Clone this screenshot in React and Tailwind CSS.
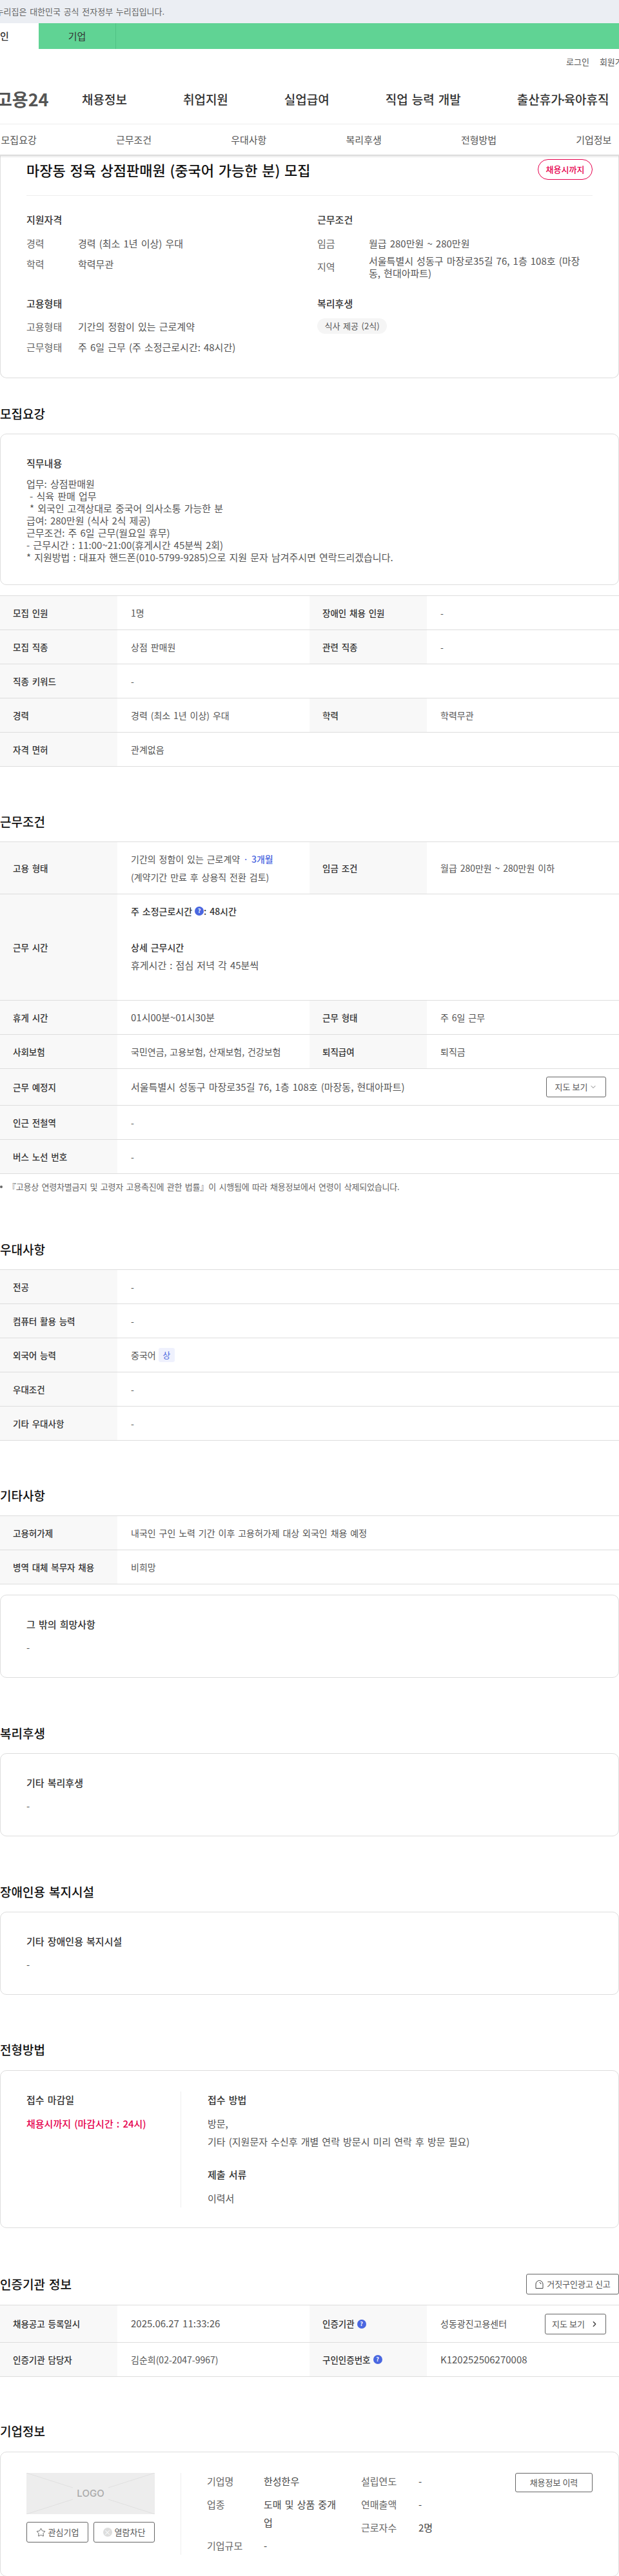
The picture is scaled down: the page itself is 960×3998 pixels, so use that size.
import { ChevronDown, ChevronRight, Star } from "lucide-react";

const NAV = ["채용정보", "취업지원", "실업급여", "직업 능력 개발"];
const TABS = ["모집요강", "근무조건", "우대사항", "복리후생", "전형방법", "기업정보"];

function Heading({ children, className = "" }) {
  return (
    <h2 className={`flex h-[32px] items-center text-[19px] font-medium text-[#111] ${className}`}>
      {children}
    </h2>
  );
}

function Label({ children }) {
  return (
    <div className="flex w-[182px] shrink-0 items-center bg-[#f8f8f8] pl-[20px] text-[13.5px] font-medium text-[#333]">
      {children}
    </div>
  );
}

function Value({ children, className = "" }) {
  return (
    <div className={`flex items-center pl-[21px] text-[14px] text-[#555] ${className}`}>
      {children}
    </div>
  );
}

function Row({ children, className = "h-[53px]" }) {
  return <div className={`flex border-b border-[#ddd] ${className}`}>{children}</div>;
}

function Pair({ a, b, c, d, className }) {
  return (
    <Row className={className}>
      <Label>{a}</Label>
      <Value className="w-[298px]">{b}</Value>
      <Label>{c}</Label>
      <Value className="flex-1">{d}</Value>
    </Row>
  );
}

function Single({ a, b, className }) {
  return (
    <Row className={className}>
      <Label>{a}</Label>
      <Value className="flex-1">{b}</Value>
    </Row>
  );
}

function Help() {
  return (
    <span className="ml-[4px] inline-flex h-[14px] w-[14px] items-center justify-center rounded-full bg-[#4a67e0] text-[9px] font-bold text-white">
      ?
    </span>
  );
}

function SmallCard({ title }) {
  return (
    <div className="h-[129px] rounded-[10px] border border-[#ddd] px-[40px] pt-[35px]">
      <p className="flex h-[20px] items-center text-[15px] font-medium text-[#333]">{title}</p>
      <p className="mt-[16px] flex h-[20px] items-center text-[15px] text-[#555]">-</p>
    </div>
  );
}

function InfoRow({ label, labelW = "w-[88px]", children }) {
  return (
    <div className="flex text-[15px] leading-[28px]">
      <span className={`shrink-0 text-[#666] ${labelW}`}>{label}</span>
      <span className="text-[#444]">{children}</span>
    </div>
  );
}

function SummaryRow({ label, children }) {
  return (
    <div className="flex h-[32px] items-center text-[15px]">
      <span className="w-[80px] shrink-0 text-[#666]">{label}</span>
      <span className="text-[#555]">{children}</span>
    </div>
  );
}

export default function App() {
  return (
    <div className="h-[3998px] w-[960px] overflow-hidden bg-white [font-family:'Noto_Sans_CJK_KR',sans-serif] [word-spacing:0.11em]">
      <div className="h-[36px] bg-[#ebeef3]">
        <p className="-ml-[23px] whitespace-nowrap text-[13px] leading-[36px] text-[#666]">
          이 누리집은 대한민국 공식 전자정부 누리집입니다.
        </p>
      </div>

      <div className="flex h-[40px] bg-[#60d394] text-[15px] text-[#333]">
        <div className="-ml-[60px] flex w-[120px] items-center justify-center bg-white font-medium">개인</div>
        <div className="flex w-[120px] items-center justify-center border-r border-[#50c284]">기업</div>
      </div>

      <div className="flex h-[40px] items-center gap-[16px] pl-[878px] text-[13px] whitespace-nowrap text-[#555]">
        <span>로그인</span>
        <span>회원가입</span>
      </div>

      <div className="flex h-[77px] items-center whitespace-nowrap border-b border-[#eee]">
        <div className="-ml-[6px] w-[133px] text-[27px] font-bold text-[#555] [word-spacing:0]">고용24</div>
        <div className="flex gap-[87px] text-[19px] font-medium text-[#333]">
          {NAV.map((item) => (
            <span key={item}>{item}</span>
          ))}
          <span className="flex">
            출산휴가<span className="flex w-[3px] justify-center">·</span>육아휴직
          </span>
        </div>
      </div>

      <div className="relative z-10 -ml-[60px] grid h-[49px] w-[1070px] grid-cols-6 text-[15px] text-[#555]">
        {TABS.map((t) => (
          <span key={t} className="flex items-center justify-center">{t}</span>
        ))}
      </div>
      <div className="relative z-10 -mt-[2px] h-[2px] bg-[#ddd] shadow-[0_1px_3px_rgba(0,0,0,0.15)]" />

      <div className="h-[345px] rounded-b-[10px] border border-t-0 border-[#ddd] px-[40px] pt-[5px]">
        <div className="flex h-[32px] items-center justify-between">
          <h1 className="text-[22px] font-medium text-[#111]">마장동 정육 상점판매원 (중국어 가능한 분) 모집</h1>
          <span className="flex h-[32px] w-[85px] items-center justify-center rounded-full border border-[#e6004d] text-[13px] font-medium text-[#e6004d]">
            채용시까지
          </span>
        </div>
        <div className="mt-[24px] border-t border-[#eee]" />
        <div className="mt-[27px] grid grid-cols-[451px_1fr]">
          <div>
            <h3 className="flex h-[20px] items-center text-[15px] font-medium text-[#333]">지원자격</h3>
            <div className="mt-[11px]">
              <SummaryRow label="경력">경력 (최소 1년 이상) 우대</SummaryRow>
              <SummaryRow label="학력">학력무관</SummaryRow>
            </div>
            <h3 className="mt-[35px] flex h-[20px] items-center text-[15px] font-medium text-[#333]">고용형태</h3>
            <div className="mt-[10px]">
              <SummaryRow label="고용형태">기간의 정함이 있는 근로계약</SummaryRow>
              <SummaryRow label="근무형태">주 6일 근무 (주 소정근로시간: 48시간)</SummaryRow>
            </div>
          </div>
          <div>
            <h3 className="flex h-[20px] items-center text-[15px] font-medium text-[#333]">근무조건</h3>
            <div className="mt-[11px]">
              <SummaryRow label="임금">월급 280만원 ~ 280만원</SummaryRow>
              <div className="flex h-[40px] items-center text-[15px]">
                <span className="w-[80px] shrink-0 text-[#666]">지역</span>
                <span className="w-[335px] leading-[19px] text-[#555]">서울특별시 성동구 마장로35길 76, 1층 108호 (마장동, 현대아파트)</span>
              </div>
            </div>
            <h3 className="mt-[27px] flex h-[20px] items-center text-[15px] font-medium text-[#333]">복리후생</h3>
            <span className="mt-[13px] inline-flex h-[24px] w-[108px] items-center justify-center rounded-full bg-[#f5f5f5] text-[13px] text-[#555]">
              식사 제공 (2식)
            </span>
          </div>
        </div>
      </div>

      <Heading className="mt-[39px] mb-[15px]">모집요강</Heading>
      <div className="h-[235px] rounded-[10px] border border-[#ddd] px-[40px] pt-[35px]">
        <h3 className="flex h-[20px] items-center text-[15px] font-medium text-[#333]">직무내용</h3>
        <div className="mt-[12px] whitespace-pre text-[15px] leading-[19px] text-[#555]">
          {`업무: 상점판매원
 - 식육 판매 업무
 * 외국인 고객상대로 중국어 의사소통 가능한 분
급여: 280만원 (식사 2식 제공)
근무조건: 주 6일 근무(월요일 휴무)
- 근무시간 : 11:00~21:00(휴게시간 45분씩 2회)
* 지원방법 : 대표자 핸드폰(010-5799-9285)으로 지원 문자 남겨주시면 연락드리겠습니다.`}
        </div>
      </div>

      <div className="mt-[16px] border-t border-[#ddd]">
        <Pair a="모집 인원" b="1명" c="장애인 채용 인원" d="-" />
        <Pair a="모집 직종" b="상점 판매원" c="관련 직종" d="-" />
        <Single a="직종 키워드" b="-" />
        <Pair a="경력" b="경력 (최소 1년 이상) 우대" c="학력" d="학력무관" />
        <Single a="자격 면허" b="관계없음" />
      </div>

      <Heading className="mt-[69px] mb-[15px]">근무조건</Heading>
      <div className="border-t border-[#ddd]">
        <Pair
          className="h-[81px]"
          a="고용 형태"
          b={
            <div className="leading-[28px]">
              <p>
                기간의 정함이 있는 근로계약 <span className="text-[#4a67e0]">· <span className="font-medium">3개월</span></span>
              </p>
              <p>(계약기간 만료 후 상용직 전환 검토)</p>
            </div>
          }
          c="임금 조건"
          d="월급 280만원 ~ 280만원 이하"
        />
        <Single
          className="h-[165px]"
          a="근무 시간"
          b={
            <div className="leading-[28px]">
              <p className="flex items-center font-medium text-[#333]">
                주 소정근로시간
                <Help />
                <span>: 48시간</span>
              </p>
              <p>&nbsp;</p>
              <p className="font-medium text-[#333]">상세 근무시간</p>
              <p className="text-[15px]">휴게시간 : 점심 저녁 각 45분씩</p>
              <p>&nbsp;</p>
            </div>
          }
        />
        <Pair a="휴게 시간" b={<span className="text-[15px]">01시00분~01시30분</span>} c="근무 형태" d="주 6일 근무" />
        <Pair a="사회보험" b="국민연금, 고용보험, 산재보험, 건강보험" c="퇴직급여" d="퇴직금" />
        <Row className="h-[57px]">
          <Label>근무 예정지</Label>
          <Value className="flex-1 justify-between pr-[20px] text-[15px]">
            서울특별시 성동구 마장로35길 76, 1층 108호 (마장동, 현대아파트)
            <button className="flex h-[32px] w-[93px] items-center justify-center gap-[3px] rounded-[3px] border border-[#666] text-[13px] text-[#555]">
              지도 보기
              <ChevronDown size={12} strokeWidth={1.5} />
            </button>
          </Value>
        </Row>
        <Single a="인근 전철역" b="-" />
        <Single a="버스 노선 번호" b="-" />
      </div>
      <p className="mt-[10px] flex h-[20px] items-center text-[13px] tracking-[-0.2px] text-[#666]">
        <span className="mr-[8px] h-[4px] w-[4px] rounded-full bg-[#666]" />
        『고용상 연령차별금지 및 고령자 고용촉진에 관한 법률』이 시행됨에 따라 채용정보에서 연령이 삭제되었습니다.
      </p>

      <Heading className="mt-[71px] mb-[15px]">우대사항</Heading>
      <div className="border-t border-[#ddd]">
        <Single a="전공" b="-" />
        <Single a="컴퓨터 활용 능력" b="-" />
        <Single
          a="외국어 능력"
          b={
            <>
              중국어
              <span className="ml-[4px] flex h-[22px] w-[25px] items-center justify-center rounded-[3px] bg-[#eff1fd] text-[13px] text-[#4a67e0]">상</span>
            </>
          }
        />
        <Single a="우대조건" b="-" />
        <Single a="기타 우대사항" b="-" />
      </div>

      <Heading className="mt-[69px] mb-[15px]">기타사항</Heading>
      <div className="border-t border-[#ddd]">
        <Single a="고용허가제" b="내국인 구인 노력 기간 이후 고용허가제 대상 외국인 채용 예정" />
        <Single a="병역 대체 복무자 채용" b="비희망" />
      </div>
      <div className="mt-[16px]">
        <SmallCard title="그 밖의 희망사항" />
      </div>

      <Heading className="mt-[70px] mb-[15px]">복리후생</Heading>
      <SmallCard title="기타 복리후생" />

      <Heading className="mt-[70px] mb-[15px]">장애인용 복지시설</Heading>
      <SmallCard title="기타 장애인용 복지시설" />

      <Heading className="mt-[69px] mb-[16px]">전형방법</Heading>
      <div className="flex h-[245px] rounded-[10px] border border-[#ddd] pt-[32px]">
        <div className="h-[180px] w-[280px] shrink-0 border-r border-[#eee] pl-[40px]">
          <h3 className="flex h-[26px] items-center text-[15px] font-medium text-[#333]">접수 마감일</h3>
          <p className="mt-[10px] text-[15px] font-medium leading-[28px] text-[#e6004d]">채용시까지 (마감시간 : 24시)</p>
        </div>
        <div className="pl-[41px] text-[15px] text-[#555]">
          <h3 className="flex h-[26px] items-center font-medium text-[#333]">접수 방법</h3>
          <p className="mt-[10px] leading-[28px]">방문,<br />기타 (지원문자 수신후 개별 연락 방문시 미리 연락 후 방문 필요)</p>
          <h3 className="mt-[24px] flex h-[26px] items-center font-medium text-[#333]">제출 서류</h3>
          <p className="mt-[10px] leading-[28px]">이력서</p>
        </div>
      </div>

      <div className="mt-[71px] mb-[16px] flex h-[32px] items-center justify-between">
        <h2 className="text-[19px] font-medium text-[#111]">인증기관 정보</h2>
        <button className="flex h-[32px] w-[144px] items-center justify-center gap-[4px] rounded-[3px] border border-[#666] text-[13px] text-[#555]">
          <svg width="15" height="15" viewBox="0 0 15 15" fill="none" stroke="#444" strokeWidth="1">
            <path d="M2 13.5V7a5.5 5.5 0 0 1 11 0v6.5z" />
            <path d="M7.5 4.5a2.5 2.5 0 0 1 2.5 2.5" />
          </svg>
          거짓구인광고 신고
        </button>
      </div>
      <div className="border-t border-[#ddd]">
        <Row className="h-[58px]">
          <Label>채용공고 등록일시</Label>
          <Value className="w-[298px] text-[15px]">2025.06.27 11:33:26</Value>
          <Label>인증기관<Help /></Label>
          <Value className="flex-1 justify-between pr-[20px]">
            성동광진고용센터
            <button className="flex h-[32px] w-[95px] items-center justify-center gap-[8px] rounded-[3px] border border-[#666] text-[13px] text-[#555]">
              지도 보기
              <ChevronRight size={14} strokeWidth={2} className="text-[#333]" />
            </button>
          </Value>
        </Row>
        <Row>
          <Label>인증기관 담당자</Label>
          <Value className="w-[298px]">김순희(02-2047-9967)</Value>
          <Label>구인인증번호<Help /></Label>
          <Value className="flex-1 text-[15px]">K120252506270008</Value>
        </Row>
      </div>

      <Heading className="mt-[68px] mb-[16px]">기업정보</Heading>
      <div className="flex rounded-[10px] border border-[#ddd] pt-[32px] pb-[33px]">
        <div className="w-[280px] shrink-0 border-r border-[#eee] pl-[40px]">
          <div className="relative flex h-[64px] w-[199px] items-center justify-center bg-[#ededed] text-[15px] font-medium text-[#aaa] [font-family:Inter,sans-serif]">
            <svg className="absolute inset-0" width="199" height="64" viewBox="0 0 199 64" stroke="#e0e0e0" strokeWidth="1">
              <path d="M0 0 72 23M199 0 127 23M0 64 72 41M199 64 127 41" />
            </svg>
            LOGO
          </div>
          <div className="mt-[12px] flex w-[199px] justify-between text-[13px] text-[#555]">
            <button className="flex h-[32px] w-[96px] items-center justify-center gap-[4px] rounded-[3px] border border-[#666]">
              <Star size={15} strokeWidth={1.3} className="text-[#444]" />
              관심기업
            </button>
            <button className="flex h-[32px] w-[95px] items-center justify-center gap-[4px] rounded-[3px] border border-[#666]">
              <span className="flex h-[14px] w-[14px] items-center justify-center rounded-full bg-[#ddd] text-[11px] leading-none text-white">×</span>
              열람차단
            </button>
          </div>
        </div>
        <div className="-mt-px flex flex-col gap-[8px] pl-[40px]">
          <InfoRow label="기업명"><span className="block w-[120px]">한성한우</span></InfoRow>
          <InfoRow label="업종"><span className="block w-[120px]">도매 및 상품 중개업</span></InfoRow>
          <InfoRow label="기업규모">-</InfoRow>
        </div>
        <div className="-mt-px ml-[31px] flex flex-col gap-[8px]">
          <InfoRow label="설립연도" labelW="w-[89px]">-</InfoRow>
          <InfoRow label="연매출액" labelW="w-[89px]">-</InfoRow>
          <InfoRow label="근로자수" labelW="w-[89px]">2명</InfoRow>
        </div>
        <button className="ml-auto mr-[40px] h-[30px] w-[120px] rounded-[3px] border border-[#666] text-[13px] text-[#555]">
          채용정보 이력
        </button>
      </div>
    </div>
  );
}
